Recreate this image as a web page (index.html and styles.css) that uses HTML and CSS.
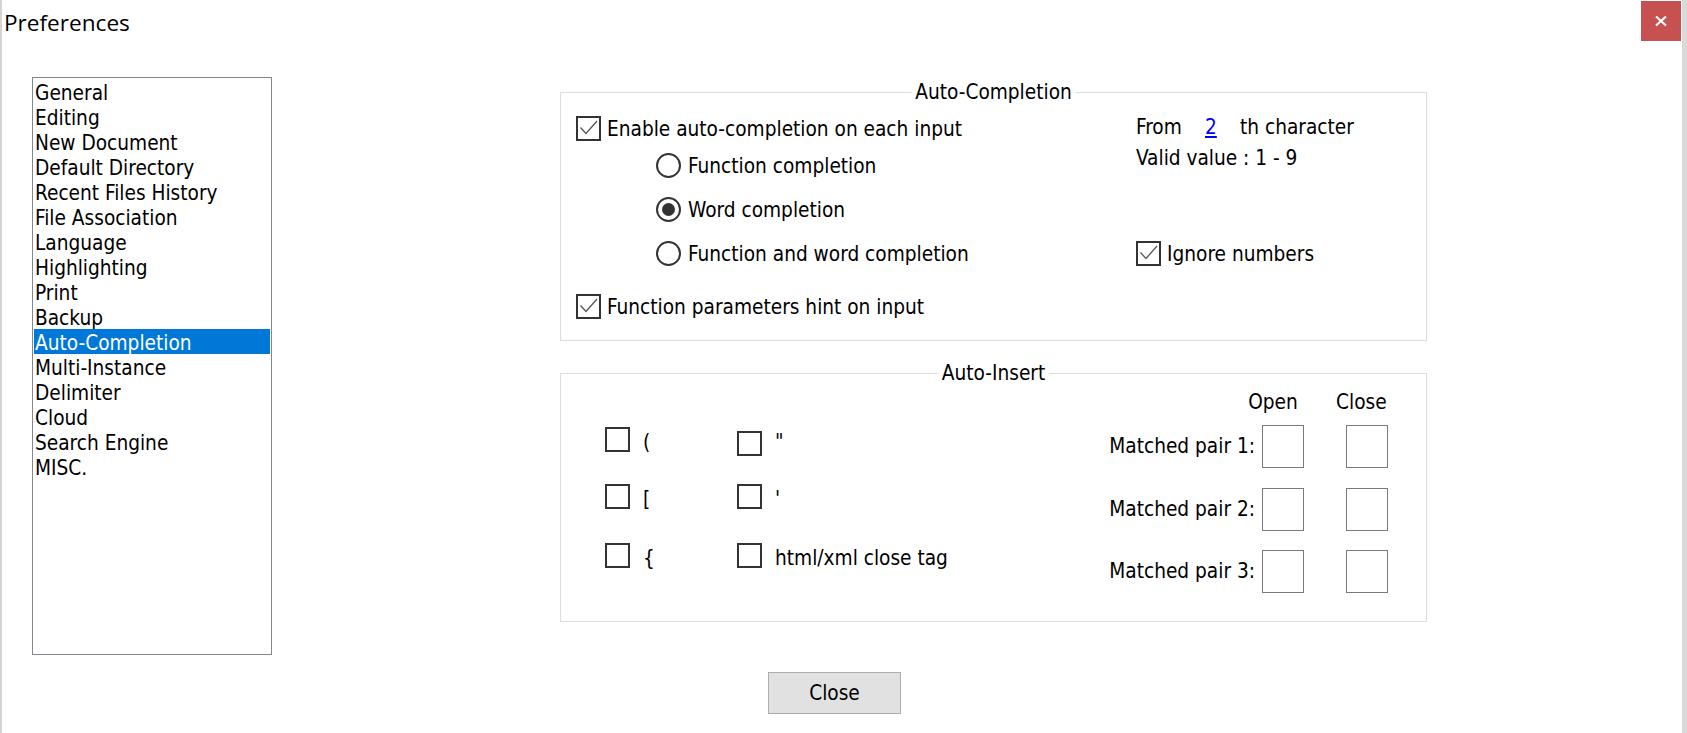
FILE: index.html
```html
<!DOCTYPE html>
<html lang="en">
<head>
<meta charset="utf-8">
<title>Preferences</title>
<link rel="stylesheet" href="styles.css">
</head>
<body>
<div class="window">
  <div class="titlebar">
    <div class="title">Preferences</div>
    <div class="close-x"><svg width="12" height="12" viewBox="0 0 12 12"><path d="M1 1.5 L11 10.5 M11 1.5 L1 10.5" stroke="#fff" stroke-width="2.2" fill="none"/></svg></div>
  </div>
  <div class="main">
    <ul class="list">
      <li>General</li>
      <li>Editing</li>
      <li>New Document</li>
      <li>Default Directory</li>
      <li>Recent Files History</li>
      <li>File Association</li>
      <li>Language</li>
      <li>Highlighting</li>
      <li>Print</li>
      <li>Backup</li>
      <li class="sel">Auto-Completion</li>
      <li>Multi-Instance</li>
      <li>Delimiter</li>
      <li>Cloud</li>
      <li>Search Engine</li>
      <li>MISC.</li>
    </ul>
    <div class="panel">
      <section class="group g1">
        <span class="legend">Auto-Completion</span>
        <div class="g1-left">
          <div class="row r-a"><span class="cb"><svg width="21" height="21" viewBox="0 0 21 21"><path d="M2.5 9.5 L8 15.5 L19 3" stroke="#555" stroke-width="1.3" fill="none"/></svg></span><span>Enable auto-completion on each input</span></div>
          <div class="row radio-row r-b"><span class="rb"></span><span>Function completion</span></div>
          <div class="row radio-row r-c"><span class="rb on"><span class="dot"></span></span><span>Word completion</span></div>
          <div class="row radio-row r-d"><span class="rb"></span><span>Function and word completion</span></div>
          <div class="row r-e"><span class="cb"><svg width="21" height="21" viewBox="0 0 21 21"><path d="M2.5 9.5 L8 15.5 L19 3" stroke="#555" stroke-width="1.3" fill="none"/></svg></span><span>Function parameters hint on input</span></div>
        </div>
        <div class="g1-right">
          <div class="from-row"><span class="f1">From</span><span class="f2">2</span><span class="f3">th character</span></div>
          <div class="valid">Valid value : 1 - 9</div>
          <div class="row r-ign"><span class="cb"><svg width="21" height="21" viewBox="0 0 21 21"><path d="M2.5 9.5 L8 15.5 L19 3" stroke="#555" stroke-width="1.3" fill="none"/></svg></span><span>Ignore numbers</span></div>
        </div>
      </section>
      <section class="group g2">
        <span class="legend">Auto-Insert</span>
        <div class="ins-left">
          <div class="ins"><span class="cb"></span><span class="lbl">(</span></div>
          <div class="ins"><span class="cb low"></span><span class="lbl">"</span></div>
          <div class="ins"><span class="cb"></span><span class="lbl">[</span></div>
          <div class="ins"><span class="cb"></span><span class="lbl">'</span></div>
          <div class="ins"><span class="cb"></span><span class="lbl">{</span></div>
          <div class="ins"><span class="cb"></span><span class="lbl">html/xml close tag</span></div>
        </div>
        <div class="pairs">
          <div class="hdr"><span class="h-open">Open</span><span class="h-close">Close</span></div>
          <div class="prow p1"><span class="plbl">Matched pair 1:</span><span class="edit"></span><span class="edit e2"></span></div>
          <div class="prow p2"><span class="plbl">Matched pair 2:</span><span class="edit"></span><span class="edit e2"></span></div>
          <div class="prow p3"><span class="plbl">Matched pair 3:</span><span class="edit"></span><span class="edit e2"></span></div>
        </div>
      </section>
      <button class="btn">Close</button>
    </div>
  </div>
</div>
</body>
</html>
```
FILE: styles.css
```css
* { box-sizing: border-box; }
html, body { margin: 0; padding: 0; background: #fff; }
body {
  font-family: "DejaVu Sans Condensed", "DejaVu Sans", sans-serif;
  font-size: 20.65px;
  color: #000;
}
.window {
  width: 1687px;
  height: 733px;
  border-left: 2px solid #d4d4d4;
  border-right: 5px solid #dadada;
  display: flex;
  flex-direction: column;
  overflow: hidden;
  background: #fff;
}
.titlebar {
  height: 41px;
  display: flex;
  justify-content: space-between;
  align-items: flex-start;
  flex: none;
}
.title {
  font-family: "Open Sans", sans-serif;
  font-size: 22.6px;
  line-height: 30px;
  padding: 8px 0 0 2px;
}
.close-x {
  width: 40px;
  height: 40px;
  margin: 1px 1px 0 0;
  background: #c75050;
  display: flex;
  align-items: center;
  justify-content: center;
}
.main {
  display: flex;
  align-items: flex-start;
}
.list {
  list-style: none;
  margin: 36px 0 0 30px;
  padding: 1px;
  width: 240px;
  height: 578px;
  border: 1px solid #828790;
  flex: none;
}
.list li {
  height: 25px;
  line-height: 22px;
  padding: 3px 0 0 1px;
  white-space: nowrap;
}
.list li.sel { background: #0078d7; color: #fff; }
.panel {
  margin: 51px 0 0 288px;
  display: flex;
  flex-direction: column;
  align-items: flex-start;
}
.group {
  position: relative;
  width: 867px;
  height: 249px;
  border: 1px solid #dcdcdc;
  flex: none;
}
.legend {
  position: absolute;
  top: -13px;
  left: 50%;
  transform: translateX(-50%);
  background: #fff;
  padding: 0 4px;
  line-height: 24px;
  white-space: nowrap;
}
.g1 { display: flex; padding-left: 15px; }
.g1-left { width: 560px; padding-top: 23px; }
.row {
  display: flex;
  align-items: center;
  height: 25px;
  line-height: 24px;
  white-space: nowrap;
}
.cb {
  width: 25px;
  height: 25px;
  border: 2px solid #333;
  margin-right: 6px;
  flex: none;
  display: flex;
  align-items: center;
  justify-content: center;
  background: #fff;
}
.rb {
  width: 25px;
  height: 25px;
  border: 2px solid #333;
  border-radius: 50%;
  margin-right: 7px;
  flex: none;
  display: flex;
  align-items: center;
  justify-content: center;
}
.rb .dot { width: 13px; height: 13px; border-radius: 50%; background: #333; }
.radio-row { margin-left: 80px; }
.r-b { margin-top: 12px; }
.r-c { margin-top: 19px; }
.r-d { margin-top: 19px; }
.r-e { margin-top: 28px; }
.g1-right { padding-top: 22px; }
.from-row { display: flex; line-height: 24px; height: 24px; white-space: nowrap; }
.f1 { width: 69px; }
.f2 { width: 35px; color: #0000ff; text-decoration: underline; }
.valid { margin-top: 7px; line-height: 24px; white-space: nowrap; }
.r-ign { margin-top: 71px; }
.g2 { display: flex; padding: 0 38px 0 44px; justify-content: space-between; }
.ins-left {
  padding-top: 53px;
  display: grid;
  grid-template-columns: 132px auto;
  grid-template-rows: 57px 59px 25px;
  align-items: start;
}
.ins { display: flex; align-items: center; height: 25px; line-height: 24px; white-space: nowrap; }
.ins .cb { margin-right: 13px; }
.ins .cb.low { margin-top: 8px; }
.ins .lbl { padding-top: 5px; }
.pairs { padding-top: 16px; }
.hdr { display: flex; height: 24px; line-height: 24px; }
.hdr span { width: 50px; text-align: center; }
.h-open { margin-left: 143px; }
.h-close { margin-left: 38px; }
.prow { display: flex; align-items: center; height: 43px; }
.p1 { margin-top: 11px; }
.p2 { margin-top: 20px; }
.p3 { margin-top: 19px; }
.plbl { width: 150px; text-align: right; line-height: 24px; padding-bottom: 2px; white-space: nowrap; }
.edit { width: 42px; height: 43px; border: 1px solid #7a7a7a; margin-left: 7px; background: #fff; }
.edit.e2 { margin-left: 42px; }
.g2 { margin-top: 32px; }
.btn {
  margin: 50px 0 0 208px;
  width: 133px;
  height: 42px;
  background: #e1e1e1;
  border: 1px solid #adadad;
  font: inherit;
  line-height: 24px;
  padding: 0;
  color: #000;
}
```
